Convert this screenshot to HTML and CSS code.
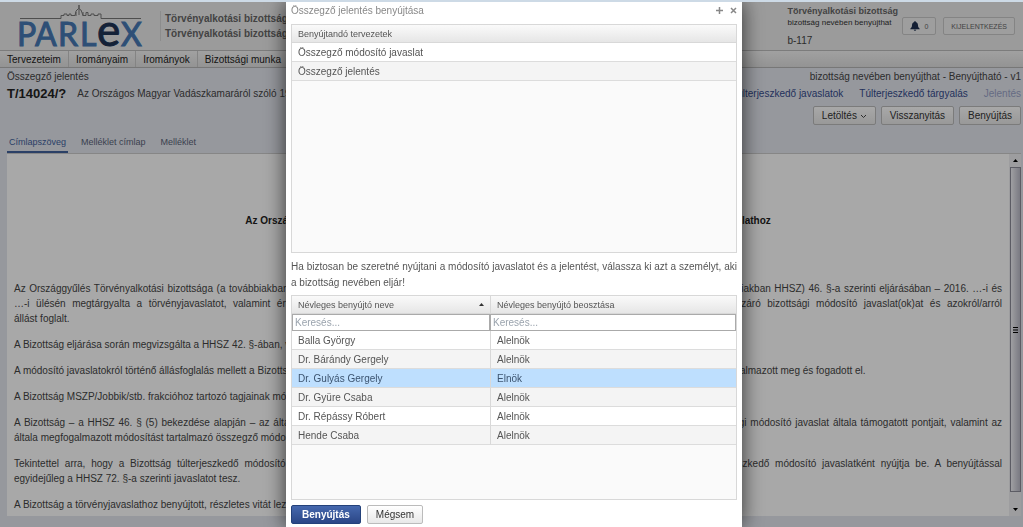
FILE: index.html
```
<!DOCTYPE html>
<html lang="hu">
<head>
<meta charset="utf-8">
<title>PARLEX</title>
<link rel="stylesheet" href="styles.css">
</head>
<body>

<!-- Header -->
<header class="header">
  <svg class="logo" width="126" height="46" viewBox="0 0 126 46" role="img" aria-label="PARLEX">
    <path class="skyline" d="M2 15.500H43V12.500H46V11H49V12.500H51V11H53V12.500H57L58 8L60 6L61 6V2V6L63 7L65 12.500H68V9.500H70V12.500H73V11H76V12.500H80V11H83V15.500H123M58 9V13M61 7V12M65 9V13"/>
    <text class="logo-text" y="43"><tspan x="-1">P</tspan><tspan x="17">A</tspan><tspan x="40">R</tspan><tspan x="62">L</tspan><tspan class="logo-e" x="79">e</tspan><tspan x="103">X</tspan></text>
  </svg>
  <div class="committee">
    <div>Törvényalkotási bizottság</div>
    <div>Törvényalkotási bizottság elnöke</div>
  </div>
  <div class="user">
    <div class="user-name">Törvényalkotási bizottság</div>
    <div class="user-role">bizottság nevében benyújthat</div>
    <div class="user-code">b-117</div>
  </div>
  <button class="head-btn bell">
    <svg width="10" height="10" viewBox="0 0 10 10"><path d="M5 0C5.600 0 5.800.500 5.700 1C7.400 1.400 8 2.800 8 4.300C8 6 8.700 6.900 9.700 7.700V8.300H.300V7.700C1.300 6.900 2 6 2 4.300C2 2.800 2.600 1.400 4.300 1C4.200.500 4.400 0 5 0ZM3.800 8.700H6.200C6.100 10.200 3.900 10.200 3.800 8.700Z"/></svg>
    0
  </button>
  <button class="head-btn logout">KIJELENTKEZÉS</button>
</header>

<!-- Menu -->
<nav class="menu">
  <a href="#">Tervezeteim</a>
  <a href="#">Irományaim</a>
  <a href="#">Irományok</a>
  <a href="#">Bizottsági munka</a>
</nav>

<main class="page">
  <div class="row">
    <span>Összegző jelentés</span>
    <span>bizottság nevében benyújthat - Benyújtható - v1</span>
  </div>
  <div class="row title-row">
    <strong class="bill-no">T/14024/?</strong>
    <span class="bill-title">Az Országos Magyar Vadászkamaráról szóló 1997. évi XLVI. törvény módosításáról</span>
    <span class="links">
      <a href="#">Túlterjeszkedő javaslatok</a>
      <a href="#">Túlterjeszkedő tárgyalás</a>
      <a href="#" class="disabled">Jelentés</a>
    </span>
  </div>
  <div class="actions">
    <button class="btn">Letöltés <svg width="7" height="5" viewBox="0 0 7 5"><path class="chevron" d="M1 1L3.500 3.500L6 1"/></svg></button>
    <button class="btn">Visszanyitás</button>
    <button class="btn">Benyújtás</button>
  </div>
  <div class="tabs">
    <a href="#" class="active">Címlapszöveg</a>
    <a href="#">Melléklet címlap</a>
    <a href="#">Melléklet</a>
  </div>

  <!-- Document -->
  <div class="document">
    <div class="text">
      <h1>Az Országos Magyar Vadászkamaráról szóló 1997. évi XLVI. törvény módosításáról szóló új törvényjavaslathoz</h1>
      <p>
        <span class="full">Az Országgyűlés Törvényalkotási bizottsága (a továbbiakban: Bizottság) az egyes házszabályi rendelkezésekről szóló 10/2014. (II. 24.) OGY határozat (a továbbiakban HHSZ) 46. §-a szerinti eljárásában – 2016. …-i és</span>
        <span class="full">…-i ülésén megtárgyalta a törvényjavaslatot, valamint értékelte a kijelölt bizottság és a kapcsolódó bizottságok által benyújtott, a részletes vitát is lezáró bizottsági módosító javaslat(ok)at és azokról/arról</span>
        állást foglalt.
      </p>
      <p>A Bizottság eljárása során megvizsgálta a HHSZ 42. §-ában, valamint a 44. §-ában foglaltakat.</p>
      <p>A módosító javaslatokról történő állásfoglalás mellett a Bizottság a törvényjavaslathoz további módosítási szándékot, egy saját, önálló módosító javaslatot is megfogalmazott meg és fogadott el.</p>
      <p>A Bizottság MSZP/Jobbik/stb. frakcióhoz tartozó tagjainak módosítási javaslatait megtárgyalta.</p>
      <p>
        <span class="full">A Bizottság – a HHSZ 46. § (5) bekezdése alapján – az általa támogatott, a részletes vitát lezáró bizottsági módosító javaslatok és a Bizottság szerinti bizottsági módosító javaslat általa támogatott pontjait, valamint az</span>
        általa megfogalmazott módosítást tartalmazó összegző módosító javaslatot nyújt be.
      </p>
      <p>
        <span class="full">Tekintettel arra, hogy a Bizottság túlterjeszkedő módosító javaslatot is támogatott, az összegző módosító javaslatát az Országgyűlésnek is, mint túlterjeszkedő módosító javaslatként nyújtja be. A benyújtással</span>
        egyidejűleg a HHSZ 72. §-a szerinti javaslatot tesz.
      </p>
      <p>A Bizottság a törvényjavaslathoz benyújtott, részletes vitát lezáró javaslatokat megvitatta.</p>
    </div>
    <div class="scrollbar">
      <svg width="5" height="3" viewBox="0 0 5 3"><path d="M0 3L2.500 0L5 3Z"/></svg>
      <div class="thumb"><svg width="5" height="6" viewBox="0 0 5 6"><path d="M0 0H5V1H0ZM0 2.500H5V3.500H0ZM0 5H5V6H0Z"/></svg></div>
      <svg class="down" width="5" height="3" viewBox="0 0 5 3"><path d="M0 0L2.500 3L5 0Z"/></svg>
    </div>
  </div>
</main>

<!-- Submit dialog -->
<div class="overlay">
  <div class="dialog" role="dialog" aria-labelledby="dialogTitle">
    <div class="dialog-head">
      <h2 id="dialogTitle">Összegző jelentés benyújtása</h2>
      <button class="icon-btn" aria-label="Nagyítás"><svg width="7" height="7" viewBox="0 0 7 7"><path d="M3.500 0V7M0 3.500H7"/></svg></button>
      <button class="icon-btn" aria-label="Bezárás"><svg width="7" height="7" viewBox="0 0 7 7"><path d="M1 1L6 6M6 1L1 6"/></svg></button>
    </div>

    <div class="grid drafts">
      <table>
        <thead><tr><th>Benyújtandó tervezetek</th></tr></thead>
        <tbody>
          <tr><td>Összegző módosító javaslat</td></tr>
          <tr><td>Összegző jelentés</td></tr>
        </tbody>
      </table>
    </div>

    <p class="question">Ha biztosan be szeretné nyújtani a módosító javaslatot és a jelentést, válassza ki azt a személyt, aki a bizottság nevében eljár!</p>

    <div class="grid people">
      <table>
        <thead>
          <tr>
            <th class="name"><span class="sorted">Névleges benyújtó neve <svg width="5" height="3" viewBox="0 0 5 3"><path d="M0 3L2.500 0L5 3Z"/></svg></span></th>
            <th>Névleges benyújtó beosztása</th>
          </tr>
          <tr class="search">
            <td><input type="text" placeholder="Keresés..." aria-label="Névleges benyújtó neve"></td>
            <td><input type="text" placeholder="Keresés..." aria-label="Névleges benyújtó beosztása"></td>
          </tr>
        </thead>
        <tbody>
          <tr><td>Balla György</td><td>Alelnök</td></tr>
          <tr><td>Dr. Bárándy Gergely</td><td>Alelnök</td></tr>
          <tr class="selected"><td>Dr. Gulyás Gergely</td><td>Elnök</td></tr>
          <tr><td>Dr. Gyüre Csaba</td><td>Alelnök</td></tr>
          <tr><td>Dr. Répássy Róbert</td><td>Alelnök</td></tr>
          <tr><td>Hende Csaba</td><td>Alelnök</td></tr>
        </tbody>
      </table>
    </div>

    <div class="dialog-buttons">
      <button class="btn primary">Benyújtás</button>
      <button class="btn">Mégsem</button>
    </div>
  </div>
</div>

</body>
</html>
```
FILE: styles.css
```
* {
  box-sizing: border-box;
}

body {
  margin: 0;
  height: 100vh;
  display: flex;
  flex-direction: column;
  overflow: hidden;
  border-top: 2px solid #cddae6;
  background-color: #e4e7ef;
  color: #444;
  font-family: "Liberation Sans", Arial, sans-serif;
  font-size: 10px;
}

a {
  color: inherit;
  text-decoration: none;
}

button {
  font-family: inherit;
  cursor: pointer;
}

/* Header */
.header {
  display: flex;
  align-items: center;
  height: 49px;
  padding: 0 8px 0 18px;
  background-color: #ececec;
  border-bottom: 1px solid #bdbdbd;
  white-space: nowrap;
}

.logo {
  overflow: visible;
}

.skyline {
  fill: none;
  stroke: #777;
  stroke-width: 1;
}

.logo-text {
  font-family: Lato, sans-serif;
  font-size: 32px;
  fill: #4678b4;
  stroke: #4678b4;
  stroke-width: 1;
}

.logo-e {
  font-size: 44px;
  fill: #1f3556;
  stroke: #1f3556;
}

.committee {
  margin-left: 16px;
  padding-left: 4px;
  border-left: 1px solid #d5d5d5;
  font-weight: bold;
  line-height: 15px;
  color: #666;
}

.user {
  width: 115px;
  margin-left: auto;
}

.user-name {
  font-size: 9px;
  font-weight: bold;
  line-height: 12px;
  color: #666;
}

.user-role {
  font-size: 8px;
  line-height: 12px;
  color: #333;
}

.user-code {
  margin-top: 6px;
  line-height: 12px;
}

.head-btn {
  height: 18px;
  padding: 0 7px;
  border: 1px solid #c8c8c8;
  border-radius: 2px;
  background-color: #f0f0f0;
  color: #666;
  font-size: 7px;
}

.bell {
  display: flex;
  align-items: center;
  gap: 4px;
  margin-right: 7px;
}

.bell svg {
  fill: #1f3050;
}

/* Menu */
.menu {
  display: flex;
  height: 17px;
  background: linear-gradient(#f4f4f4, #e0e0e0);
  border-bottom: 1px solid #b5b5b5;
  white-space: nowrap;
}

.menu a {
  padding: 0 7px;
  border-right: 1px solid #c8c8c8;
  line-height: 17px;
  color: #222;
}

/* Page */
.page {
  flex: 1;
  min-height: 0;
  display: flex;
  flex-direction: column;
  padding: 0 2px 11px 7px;
}

.row {
  display: flex;
  justify-content: space-between;
  line-height: 18px;
}

.title-row {
  line-height: 16px;
  white-space: nowrap;
}

.bill-no {
  margin-right: 11px;
  font-size: 13px;
  color: #222;
}

.links {
  display: flex;
  gap: 16px;
  margin-left: auto;
  color: #354b8c;
}

.links .disabled {
  color: #9aa3c8;
}

.actions {
  display: flex;
  justify-content: flex-end;
  gap: 5px;
  margin-top: 4px;
}

.btn {
  height: 19px;
  padding: 0 8px;
  border: 1px solid #bbb;
  border-radius: 2px;
  background: linear-gradient(#fff, #e8e8e8);
  color: #333;
  font-size: 10px;
}

.chevron {
  fill: none;
  stroke: #444;
}

.tabs {
  display: flex;
  gap: 11px;
  margin-top: 9px;
  font-size: 9px;
  line-height: 17px;
  color: #5a6478;
}

.tabs a {
  padding: 0 2px;
  border-bottom: 2px solid transparent;
}

.tabs .active {
  border-color: #42619c;
  color: #42619c;
}

/* Document */
.document {
  flex: 1;
  min-height: 0;
  display: flex;
  border-top: 1px solid #ccc;
  background-color: #fff;
}

.text {
  flex: 1;
  overflow: hidden;
  padding: 59px 7px 0;
  line-height: 15px;
}

.text h1 {
  margin: 0 0 53px;
  font-size: 10px;
  text-align: center;
  color: #222;
}

.text p {
  margin: 0 0 11px;
}

.full {
  display: block;
  text-align: justify;
  text-align-last: justify;
}

.scrollbar {
  width: 12px;
  display: flex;
  flex-direction: column;
  align-items: center;
  gap: 5px;
  padding: 5px 0;
  background-color: #efeff2;
}

.thumb {
  flex: 1;
  width: 11px;
  display: flex;
  align-items: center;
  justify-content: center;
  border: 1px solid #8c8c98;
  background: linear-gradient(to right, #f2f2f6, #b9b9c6);
}

.down {
  margin-top: 11px;
}

/* Dialog */
.overlay {
  position: fixed;
  top: 2px;
  right: 0;
  bottom: 0;
  left: 0;
  padding-left: 5px;
  display: flex;
  justify-content: center;
  overflow: hidden;
  background-color: rgba(0, 0, 0, 0.34);
}

.dialog {
  width: 456px;
  padding: 0 5px 6px;
  background-color: #fff;
  box-shadow: 0 0 20px rgba(0, 0, 0, 0.7);
  color: #555;
}

.dialog-head {
  display: flex;
  align-items: center;
  gap: 7px;
  height: 22px;
  padding-bottom: 5px;
}

.dialog-head h2 {
  margin: 0 auto 0 0;
  font-size: 10px;
  font-weight: normal;
  color: #888;
}

.icon-btn {
  display: flex;
  padding: 0;
  border: none;
  background: none;
}

.icon-btn path {
  fill: none;
  stroke: #888;
  stroke-width: 1.5;
}

.grid {
  border: 1px solid #d8d8d8;
  background-color: #fafafa;
}

.drafts {
  height: 229px;
}

.people {
  height: 205px;
}

table {
  width: 100%;
  table-layout: fixed;
  border-collapse: separate;
  border-spacing: 0;
}

th {
  height: 18px;
  padding: 0 6px;
  border-bottom: 1px solid #d8d8d8;
  background: linear-gradient(#fafafa, #e6e6e6);
  font-size: 9px;
  font-weight: normal;
  text-align: left;
}

.sorted {
  display: flex;
  justify-content: space-between;
  align-items: center;
}

.sorted svg {
  fill: #333;
}

.name {
  width: 198px;
}

th + th,
td + td {
  border-left: 1px solid #d8d8d8;
}

tbody td {
  height: 19px;
  padding: 0 6px;
  border-bottom: 1px solid #dcdcdc;
  background-color: #fff;
}

tbody tr:nth-child(even) td {
  background-color: #f4f4f4;
}

tbody .selected td {
  background-color: #bedffe;
  color: #3c5470;
}

.search td {
  height: 17px;
  padding: 0;
  border: none;
}

.search input {
  display: block;
  width: 100%;
  height: 17px;
  padding: 0 2px;
  border: 1px solid #aaa;
  background-color: #fff;
  font-family: inherit;
  font-size: 10px;
}

.search input::placeholder {
  color: #9aa3ad;
}

.question {
  margin: 6px 0 4px;
  line-height: 16px;
  text-align: justify;
}

.dialog-buttons {
  display: flex;
  gap: 6px;
  margin-top: 5px;
}

.primary {
  padding: 0 10px;
  border-color: #24417a;
  background: linear-gradient(#4568ae, #2b4686);
  color: #fff;
  font-weight: bold;
}
```
